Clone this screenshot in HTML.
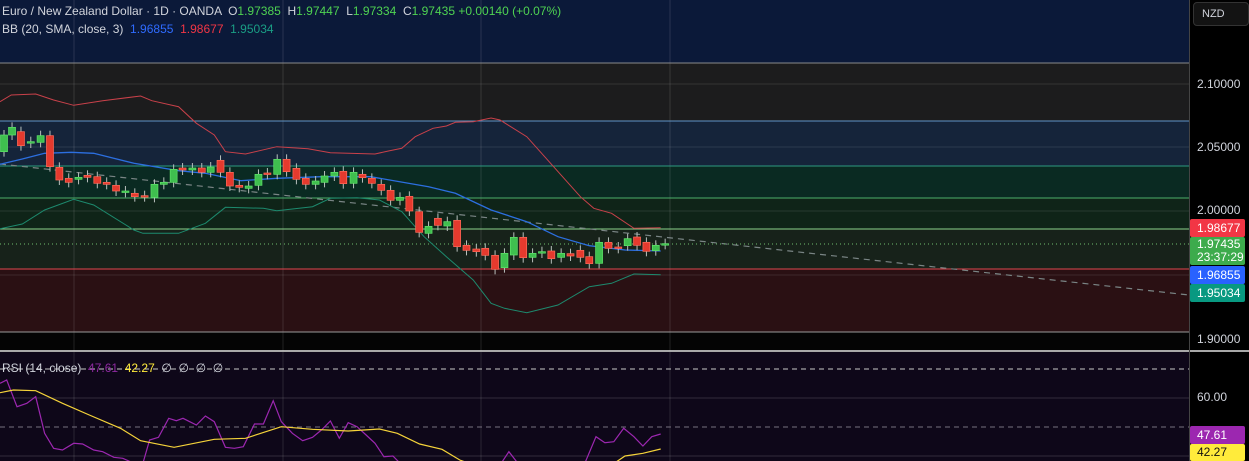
<!DOCTYPE html>
<html><head><meta charset="utf-8"><style>
html,body{margin:0;padding:0;background:#000;width:1249px;height:461px;overflow:hidden;font-family:"Liberation Sans",sans-serif}
#c{position:absolute;left:0;top:0}
.t{position:absolute;font-size:12px;color:#d1d4dc;white-space:nowrap}
.tag{position:absolute;left:1190px;width:55px;font-size:12px;color:#fff;padding-left:7px;box-sizing:border-box;border-radius:2px}
</style></head><body>
<svg id="c" width="1249" height="461" xmlns="http://www.w3.org/2000/svg"></svg>
<div class="t" style="left:2px;top:4px">Euro / New Zealand Dollar · 1D · OANDA &nbsp;O<span style="color:#4fd352">1.97385</span> &nbsp;H<span style="color:#4fd352">1.97447</span> &nbsp;L<span style="color:#4fd352">1.97334</span> &nbsp;C<span style="color:#4fd352">1.97435</span> <span style="color:#4fd352">+0.00140 (+0.07%)</span></div>
<div class="t" style="left:2px;top:22px">BB (20, SMA, close, 3) &nbsp;<span style="color:#2f6bff">1.96855</span> &nbsp;<span style="color:#f23645">1.98677</span> &nbsp;<span style="color:#1a9e85">1.95034</span></div>
<div class="t" style="left:2px;top:361px">RSI (14, close) &nbsp;<span style="color:#8e2aa0">47.61</span> &nbsp;<span style="color:#ffeb3b">42.27</span> &nbsp;∅ &nbsp;∅ &nbsp;∅ &nbsp;∅</div>
<div style="position:absolute;left:1193px;top:2px;width:56px;height:24px;background:#131313;border:1px solid #333;border-radius:4px;box-sizing:border-box;color:#d1d4dc;font-size:11px;line-height:22px;padding-left:8px">NZD</div>
<div class="t" style="left:1197px;top:77px">2.10000</div>
<div class="t" style="left:1197px;top:140px">2.05000</div>
<div class="t" style="left:1197px;top:203px">2.00000</div>
<div class="t" style="left:1197px;top:332px">1.90000</div>
<div class="t" style="left:1197px;top:390px">60.00</div>
<div class="tag" style="top:219px;height:18px;line-height:18px;background:#f23645">1.98677</div>
<div class="tag" style="top:237px;height:28px;line-height:13px;padding-top:1px;background:#3dab4c">1.97435<br>23:37:29</div>
<div class="tag" style="top:266px;height:18px;line-height:18px;background:#2962ff">1.96855</div>
<div class="tag" style="top:284px;height:18px;line-height:18px;background:#089981">1.95034</div>
<div class="tag" style="top:426px;height:18px;line-height:18px;background:#9c27b0">47.61</div>
<div class="tag" style="top:444px;height:17px;line-height:17px;background:#ffeb3b;color:#111">42.27</div>
<script>
var s=document.getElementById('c'),h='';
function R(x,y,w,hh,f){h+='<rect x="'+x+'" y="'+y+'" width="'+w+'" height="'+hh+'" fill="'+f+'"/>';}
function L(x1,y1,x2,y2,c,w,d){h+='<line x1="'+x1+'" y1="'+y1+'" x2="'+x2+'" y2="'+y2+'" stroke="'+c+'" stroke-width="'+(w||1)+'"'+(d?' stroke-dasharray="'+d+'"':'')+'/>';}
var W=1189;
R(0,0,W,63,'#0b1939');R(0,63,W,58,'#1c1c1d');R(0,121,W,45,'#15243a');R(0,166,W,32,'#0a2a22');R(0,198,W,31,'#0f2418');R(0,229,W,40,'#17221a');R(0,269,W,63,'#2a1013');R(0,332,W,19,'#040404');
R(0,352,W,109,'#0e0719');
[84,147,211,275].forEach(function(y){L(0,y,W,y,'rgba(255,255,255,0.10)');});
[74,283,481,670].forEach(function(x){L(x,0,x,351,'rgba(255,255,255,0.12)');L(x,352,x,461,'rgba(255,255,255,0.12)');});
L(0,63,W,63,'#8a8a8a');L(0,121,W,121,'#5f95c8');L(0,166,W,166,'#2d9a80');L(0,198,W,198,'#4caf6a');L(0,229,W,229,'#8bd38b');L(0,269,W,269,'#e0474f');L(0,332,W,332,'#9a9a9a');
L(0,351,1249,351,'#e0e0e0',1.5);L(1189.5,0,1189.5,461,'#444');
function P(a,sx,sy,oy,c,w,d){var p=[];for(var i=0;i<a.length;i+=2)p.push((a[i]/sx).toFixed(1)+','+(a[i+1]/sy+oy).toFixed(1));h+='<polyline fill="none" stroke="'+c+'" stroke-width="'+(w||1)+'"'+(d?' stroke-dasharray="'+d+'"':'')+' points="'+p.join(' ')+'"/>';}
var up=[0,185,25,165,80,162,120,180,165,196,230,182,315,168,340,182,400,200,440,250,480,285,505,335,550,342,620,320,690,326,740,338,840,342,870,333,900,325,930,290,970,265,1000,258,1020,247,1060,245,1100,234,1120,240,1180,290,1240,380,1300,470,1330,505,1370,520,1420,565,1480,563];
var md=[0,373,50,357,100,340,160,337,210,340,300,370,400,392,460,400,540,422,620,415,720,410,830,410,960,440,1020,460,1100,510,1180,545,1250,590,1320,617,1400,630,1480,633];
var lo=[0,566,50,552,100,510,165,478,210,495,300,570,320,580,400,580,460,550,505,502,590,505,620,512,700,500,740,475,800,473,850,480,900,515,950,590,1000,650,1060,720,1100,790,1130,805,1180,818,1250,795,1320,740,1370,730,1420,702,1480,704];
L(0,164,1189,295,'#7a8585',1.2,'6,5');
L(0,244,1189,244,'#6fbf6f',1,'1,3');
P(up,2.24,3,40,'#c9414a',1);P(md,2.24,3,40,'#2c6fe0',1.3);P(lo,2.24,3,40,'#1d8a6e',1);
var cd=[[0,285,335,'g'],[18,262,285,'g'],[38,275,317,'r'],[60,305,309,'g'],[82,287,307,'g'],[103,287,380,'r'],[124,382,420,'r'],[145,415,427,'r'],[167,412,418,'g'],[187,406,412,'r'],[209,410,430,'r'],[230,427,433,'r'],[251,436,453,'r'],[272,453,457,'g'],[293,460,470,'r'],[315,467,470,'r'],[337,433,472,'g'],[358,427,433,'g'],[380,388,427,'g'],[400,384,390,'r'],[422,384,390,'g'],[443,384,397,'r'],[463,381,397,'g'],[485,361,397,'r'],[506,397,438,'r'],[527,436,442,'r'],[548,438,445,'g'],[570,403,436,'g'],[590,399,403,'r'],[612,358,403,'g'],[633,358,395,'r'],[655,385,418,'r'],[676,415,433,'r'],[698,423,433,'g'],[718,408,427,'g'],[740,397,408,'g'],[760,394,431,'r'],[783,397,430,'g'],[803,403,413,'r'],[824,415,430,'r'],[845,433,451,'r'],[866,451,481,'r'],[887,472,481,'g'],[908,469,513,'r'],[930,515,577,'r'],[951,559,580,'g'],[972,535,556,'r'],[993,545,558,'g'],[1015,541,620,'r'],[1036,616,631,'r'],[1058,627,635,'r'],[1078,625,646,'r'],[1100,646,688,'r'],[1121,640,683,'g'],[1142,592,645,'g'],[1163,592,653,'r'],[1184,640,652,'g'],[1205,635,639,'g'],[1226,633,656,'r'],[1248,640,652,'g'],[1269,641,648,'r'],[1291,631,652,'r'],[1311,650,671,'r'],[1333,607,670,'g'],[1354,607,625,'r'],[1376,621,625,'r'],[1397,596,617,'g'],[1418,591,616,'r'],[1439,607,634,'r'],[1460,616,632,'g'],[1481,611,613,'g']];
cd.forEach(function(c){var x=c[0]/2.24+4,t=c[1]/3+40,b=c[2]/3+40,col=c[3]=='g'?'#3fbf4f':'#e53a2e',bd=c[3]=='g'?'#5fe36a':'#ff6b5a';
L(x,t-5,x,b+5,'#b9c0bd',1);h+='<rect x="'+(x-3.5)+'" y="'+t+'" width="7" height="'+Math.max(b-t,1.5)+'" fill="'+col+'" stroke="'+bd+'" stroke-width="0.7"/>';});
L(0,369,1189,369,'#c8c8c8',1,'5,4');L(0,398,1189,398,'rgba(255,255,255,0.15)');L(0,427,1189,427,'#77707f',1,'5,4');L(0,456,1189,456,'rgba(255,255,255,0.15)');
var rsi=[0,100,15,90,38,170,60,160,80,140,100,250,120,295,140,300,165,280,185,282,210,300,230,305,255,322,275,325,300,340,320,340,335,270,355,262,378,205,395,212,410,205,440,225,460,198,480,215,505,292,525,295,545,290,570,222,590,222,612,152,630,215,655,250,678,272,700,262,720,240,740,213,760,265,780,218,800,230,820,255,840,280,860,320,880,318,900,345,1120,345,1140,305,1160,340,1310,340,1335,260,1355,278,1375,275,1397,235,1420,260,1440,288,1460,260,1480,252];
var yl=[0,128,30,120,80,122,140,160,200,195,270,235,315,272,390,292,480,268,550,265,630,230,700,238,780,243,850,237,890,250,940,282,990,298,1030,330,1060,345,1370,345,1400,318,1440,310,1480,297];
P(rsi,2.24,3,350,'#9c27b0',1.2);P(yl,2.24,3,350,'#f5d33a',1.2);
s.innerHTML=h;
</script>
</body></html>
